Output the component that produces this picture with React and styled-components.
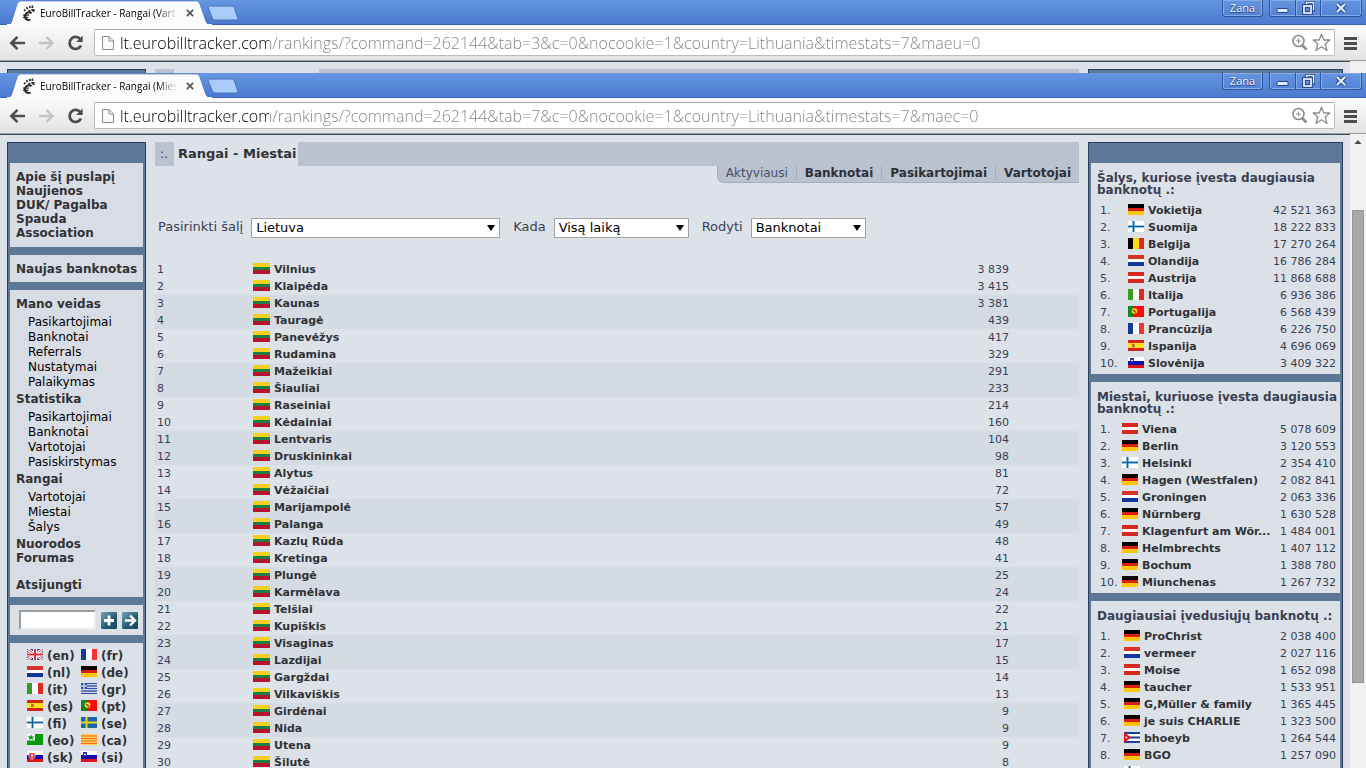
import React from 'react';
import styled, { createGlobalStyle, css } from 'styled-components';

const GlobalStyle = createGlobalStyle`
  * { box-sizing: border-box; }
  body {
    margin: 0;
    height: 100vh;
    overflow: hidden;
    background: #dde2e9;
    font-family: 'DejaVu Sans', Verdana, sans-serif;
    font-size: 12px;
    color: #393f53;
  }
  #root { height: 100%; }
  a { color: inherit; text-decoration: none; }
  button { border: 0; padding: 0; margin: 0; background: none; }
`;

/* ---------- browser window ---------- */

const Screen = styled.div`
  height: 100%;
  display: flex;
  flex-direction: column;
`;

const Window = styled.section`
  display: flex;
  flex-direction: column;
  overflow: hidden;
  ${(p) => (p.$behind ? css`flex: 0 0 73px;` : css`flex: 1; min-height: 0;`)}
`;

const Frame = styled.header`
  flex: none;
  display: flex;
  height: 25px;
  padding: 0 4px 0 7px;
  background: linear-gradient(#6596e1, #4b79cf);
  border-bottom: 1px solid #3b62ae;
`;

const Tab = styled.div`
  position: relative;
  z-index: 1;
  display: flex;
  align-items: center;
  width: 204px;
  height: 25px;
  padding: 0 17px 0 15px;
`;

const TabShape = styled.svg`
  position: absolute;
  left: 0;
  top: 0;
  z-index: -1;
`;

const TabTitle = styled.span`
  flex: 1;
  margin: 0 8px 0 4px;
  overflow: hidden;
  white-space: nowrap;
  font: 10px/14px 'Open Sans', Tahoma, sans-serif;
  color: #000;
  mask-image: linear-gradient(90deg, #000 85%, transparent);
`;

const NewTab = styled.button`
  display: flex;
  margin: 5px auto 0 -4px;
  height: 16px;
`;

const CaptionGroup = styled.div`
  display: flex;
  height: 17px;
  margin-left: 6px;
  border: 1px solid #2f559d;
  border-top: 0;
  border-radius: 0 0 3px 3px;
  box-shadow: inset 0 0 0 1px #86aae6;
`;

const CaptionButton = styled.button`
  display: flex;
  align-items: center;
  justify-content: center;
  width: ${(p) => p.$width}px;
  font: 11px/16px 'Open Sans', Tahoma, sans-serif;
  color: #fff;
  text-shadow: 0 0 1px #1d3c78, 0 1px 1px #1d3c78;
  & + & { border-left: 1px solid #2f559d; box-shadow: inset 1px 0 0 #86aae6; }
`;

const Toolbar = styled.div`
  flex: none;
  display: flex;
  align-items: center;
  height: 35px;
  padding: 0 7px 0 8px;
  background: linear-gradient(#fbfbfb, #e3e3e3);
`;

const ToolbarButton = styled.button`
  display: flex;
  width: 18px;
  height: 18px;
  margin-right: ${(p) => p.$gap || 11}px;
`;

const AddressBar = styled.div`
  flex: 1;
  display: flex;
  align-items: center;
  gap: 4px;
  height: 27px;
  margin-right: 8px;
  padding: 0 3px 0 6px;
  background: #fff;
  border: 1px solid #bdbdbd;
  border-top-color: #a9a9a9;
  border-radius: 2px;
`;

const AddressInput = styled.input`
  flex: 1;
  min-width: 0;
  padding: 0 0 0 1px;
  border: 0;
  outline: 0;
  font: 300 16px/22px 'Open Sans', Tahoma, sans-serif;
  color: transparent;
  background: linear-gradient(90deg, #000 150px, #808080 150px);
  background-clip: text;
`;

const Viewport = styled.div`
  flex: 1;
  min-height: 0;
  display: flex;
  border-top: 1px solid #9b9b9b;
  overflow: hidden;
`;

const Page = styled.div`
  flex: 1;
  display: flex;
  gap: 9px;
  padding: 7px 7px 0;
  border-top: 1px solid #3c4c69;
  overflow: hidden;
`;

const Scrollbar = styled.div`
  width: 16px;
  background: #f1f1f1;
  display: flex;
  flex-direction: column;
  align-items: center;
`;

const Thumb = styled.div`
  width: 12px;
  height: 473px;
  margin-top: 59px;
  background: #a8a8a8;
  border: 1px solid #959595;
`;

const FootIcon = () => (
  <svg width="14" height="18" viewBox="0 0 14 18" fill="none" stroke="#2b2b2b">
    <path d="M9.500 9.200C7.500 7.500 3.800 8.200 3.100 11.200C2.400 14.600 4.600 16.800 8.600 15.600" strokeWidth="2" />
    <path d="M1 11.200h6M1 13.400h5.400" strokeWidth="1.200" />
    <path d="M2 5.600l1.400 1.400M4.400 3.200l1.200 1.800M7.400 2l.8 2M10.400 1.400v2.600M9.400 5.400l2.400 1.400M6.400 6.400l2 .8M11.600 5v3" strokeWidth="1.700" />
  </svg>
);

const Browser = ({ title, url, behind, children }) => (
  <Window $behind={behind}>
    <Frame>
      <Tab>
        <TabShape width="206" height="25" viewBox="0 0 206 25">
          <path d="M0 25C4 25 4.500 22 5.500 19L9.500 6C10.500 2.500 11.500 1 14 1H189C191.500 1 192.500 2.500 193.500 6L198 19C199 22 200 25 205 25Z" fill="#fbfbfb" stroke="#3f68b4" strokeOpacity=".6" />
          <path d="M0 24.500H205" stroke="#fbfbfb" />
        </TabShape>
        <FootIcon />
        <TabTitle>{title}</TabTitle>
        <svg width="8" height="8" viewBox="0 0 9 9" stroke="#555" strokeWidth="1.900">
          <path d="M1 1l7 7M8 1L1 8" />
        </svg>
      </Tab>
      <NewTab aria-label="New tab">
        <svg width="32" height="16" viewBox="0 0 32 16">
          <path d="M3 1H24C26 1 27 2 27.600 3.500L30.500 12.500C31 14 30.500 15 29 15H9C7 15 6 14.500 5.300 13L1.300 3C1 1.500 1.500 1 3 1Z" fill="#a9cbf8" stroke="#4a72bb" />
        </svg>
      </NewTab>
      <CaptionGroup>
        <CaptionButton $width={39}>Zana</CaptionButton>
      </CaptionGroup>
      <CaptionGroup>
        <CaptionButton $width={25} aria-label="Minimize">
          <svg width="13" height="16" viewBox="0 0 13 16">
            <rect x="1" y="8.500" width="11" height="4" rx="1" fill="#dfeafc" stroke="#24437f" />
          </svg>
        </CaptionButton>
        <CaptionButton $width={25} aria-label="Restore">
          <svg width="13" height="14" viewBox="0 0 13 14" fill="none">
            <path d="M4.500 3.500V1.500H11.500V8.500H9.500" stroke="#24437f" strokeWidth="3.400" />
            <path d="M4.500 3.500V1.500H11.500V8.500H9.500" stroke="#dfeafc" strokeWidth="1.600" />
            <rect x="2" y="5" width="7" height="7" stroke="#24437f" strokeWidth="3.600" />
            <rect x="2" y="5" width="7" height="7" stroke="#dfeafc" strokeWidth="1.800" />
          </svg>
        </CaptionButton>
        <CaptionButton $width={41} aria-label="Close">
          <svg width="12" height="12" viewBox="0 0 12 12">
            <path d="M2 2l8 8M10 2l-8 8" stroke="#24437f" strokeWidth="4.400" />
            <path d="M2 2l8 8M10 2l-8 8" stroke="#dfeafc" strokeWidth="2.400" />
          </svg>
        </CaptionButton>
      </CaptionGroup>
    </Frame>
    <Toolbar>
      <ToolbarButton aria-label="Back">
        <svg width="18" height="18" viewBox="0 0 18 18" fill="none" stroke="#4d4d4d" strokeWidth="2.600">
          <path d="M17 9H4M9.500 2.800L3.300 9L9.500 15.200" />
        </svg>
      </ToolbarButton>
      <ToolbarButton aria-label="Forward">
        <svg width="18" height="18" viewBox="0 0 18 18" fill="none" stroke="#c3c3c3" strokeWidth="2.400">
          <path d="M2 9h13M9.500 3L15.500 9L9.500 15" />
        </svg>
      </ToolbarButton>
      <ToolbarButton aria-label="Reload" $gap={10}>
        <svg width="18" height="18" viewBox="0 0 18 18" fill="none">
          <path d="M14.500 5.500A6 6 0 1 0 15 11.500" stroke="#4d4d4d" strokeWidth="2.800" />
          <path d="M16.700 1.500V8H10.200Z" fill="#4d4d4d" />
        </svg>
      </ToolbarButton>
      <AddressBar>
        <svg width="14" height="16" viewBox="0 0 14 16" fill="#fafafa" stroke="#8a8a8a">
          <path d="M1.500 1.500H8L12.500 6V14.500H1.500ZM8 1.500V6H12.500" />
        </svg>
        <AddressInput aria-label="Address" defaultValue={url} />
        <svg width="17" height="17" viewBox="0 0 17 17" fill="none" stroke="#8c8c8c">
          <circle cx="7.500" cy="7" r="5.500" strokeWidth="1.600" />
          <path d="M11.500 11.500L15.500 15.500" strokeWidth="2.600" />
          <path d="M5 7h5M7.500 4.500v5" />
        </svg>
        <svg width="19" height="19" viewBox="0 0 19 19" fill="none" stroke="#8c8c8c" strokeWidth="1.300">
          <path d="M9.500 1.200L11.800 7H17.800L13.200 11L15 17.500L9.500 13.800L4 17.500L5.800 11L1.200 7H7.200Z" strokeLinejoin="round" />
        </svg>
      </AddressBar>
      <ToolbarButton aria-label="Menu" $gap={-2}>
        <svg width="15" height="18" viewBox="0 0 15 18" stroke="#4d4d4d" strokeWidth="3">
          <path d="M1 4.500h13M1 9.500h13M1 14.500h13" />
        </svg>
      </ToolbarButton>
    </Toolbar>
    <Viewport>
      <Page>{children}</Page>
      <Scrollbar>
        <svg width="16" height="17" viewBox="0 0 16 17">
          <path d="M8 6l3.500 4h-7z" fill="#4a4a4a" />
        </svg>
        <Thumb />
      </Scrollbar>
    </Viewport>
  </Window>
);

/* ---------- flags ---------- */

const horizontal = {
  lt: ['#f4cf1d', '#1d7d45', '#b9122b'],
  de: ['#000', '#dc1f12', '#fdc50b'],
  nl: ['#d63226', '#fff', '#12359c'],
  at: ['#d3291f', '#fbf3ef', '#d3291f'],
};
const vertical = {
  be: ['#000', '#fbdc14', '#dd2a1f'],
  it: ['#3b9a22', '#fff', '#dd2a1f'],
  fr: ['#173a93', '#fff', '#f23530'],
};

const flagArt = {
  es: <><rect width="16" height="11" fill="#d0261c" /><rect y="3" width="16" height="5" fill="#ffe21a" /><path d="M4 4h3v3h-3z" fill="#d08a3c" /><path d="M5 3.500v4" stroke="#a4491e" /></>,
  fi: <><rect width="16" height="11" fill="#fff" /><path d="M0 5.500h16M5.500 0v11" stroke="#6fa9cf" strokeWidth="2.600" /><path d="M0 5.500h16M5.500 0v11" stroke="#0f5fa6" /></>,
  se: <><rect width="16" height="11" fill="#1c66a8" /><path d="M0 5.500h16M5.500 0v11" stroke="#f1d51c" strokeWidth="2" /></>,
  pt: <><rect width="16" height="11" fill="#fb0d0a" /><rect width="6" height="11" fill="#17861f" /><circle cx="6.500" cy="5" r="2.800" fill="#f6dc3e" /><path d="M5 4l3 2.500" stroke="#c22516" strokeWidth="1.600" /></>,
  si: <><rect width="16" height="11" fill="#1010a8" /><rect width="16" height="4" fill="#fff" /><rect y="8" width="16" height="3" fill="#e0141c" /><path d="M2 1h4v3L4 6L2 4z" fill="#2a35b4" /><path d="M3 3.500h2" stroke="#fff" /></>,
  sk: <><rect width="16" height="11" fill="#1010a8" /><rect width="16" height="4" fill="#fff" /><rect y="8" width="16" height="3" fill="#e0141c" /><path d="M2 2h6v4.500L5 8.500L2 6.500z" fill="#e0141c" stroke="#fff" strokeWidth=".6" /><path d="M5 3v4M3.600 4.500h2.800" stroke="#fff" strokeWidth=".9" /></>,
  gr: <><rect width="16" height="11" fill="#fff" /><path d="M0 .5h16M0 3h16M0 5.500h16M0 8h16M0 10.500h16" stroke="#2f4fa5" strokeWidth="1.400" /><rect width="6" height="6" fill="#2f4fa5" /><path d="M3 0v6M0 3h6" stroke="#fff" /></>,
  eo: <><rect width="16" height="11" fill="#079b0c" /><rect width="8" height="6.500" fill="#eef8ee" /><path d="M4 .5l1 2h2.500l-2 1.400.9 2.200L4 4.700 1.600 6.100l.9-2.200-2-1.400H3z" fill="#079b0c" /></>,
  ca: <><rect width="16" height="11" fill="#fdcf4b" /><path d="M0 2h16M0 4.500h16M0 7h16M0 9.500h16" stroke="#ee6a26" strokeWidth="1.200" /></>,
  cu: <><rect width="16" height="11" fill="#fff" /><path d="M0 1h16M0 5.500h16M0 10h16" stroke="#17419a" strokeWidth="2" /><path d="M0 0L7 5.500L0 11z" fill="#e0141c" /><circle cx="2.300" cy="5.500" r="1" fill="#fff" /></>,
  en: <><rect width="16" height="11" fill="#2c3f94" /><path d="M0 0L16 11M16 0L0 11" stroke="#fff" strokeWidth="3" /><path d="M0 0L16 11M16 0L0 11" stroke="#df4450" /><path d="M8 0v11M0 5.500h16" stroke="#fff" strokeWidth="4" /><path d="M8 0v11M0 5.500h16" stroke="#dd2f35" strokeWidth="2" /></>,
};

const FlagSvg = styled.svg`
  display: inline-block;
  flex: none;
  margin: 0 4px 3px 0;
`;

const Flag = ({ code, width = 16 }) => (
  <FlagSvg width={width} height="11" viewBox="0 0 16 11" preserveAspectRatio="none" shapeRendering={flagArt[code] ? 'auto' : 'crispEdges'}>
    {horizontal[code] && horizontal[code].map((c, i) => <rect key={i} y={i * 3.67} width="16" height="3.700" fill={c} />)}
    {vertical[code] && vertical[code].map((c, i) => <rect key={i} x={i * 5.33} width="5.400" height="11" fill={c} />)}
    {flagArt[code]}
  </FlagSvg>
);

/* ---------- side panels ---------- */

const Panel = styled.aside`
  flex: none;
  width: ${(p) => p.$width}px;
  display: flex;
  flex-direction: column;
  gap: 8px;
  padding: 20px 2px 0;
  border: 1px solid #2b3d5b;
  border-bottom: 0;
  background: #5f7797;
`;

const Box = styled.div`
  flex: none;
  padding: 7px 6px;
  background: #dce1e8;
`;

const MenuBox = styled(Box)`
  padding-bottom: ${(p) => p.$bottom || 7}px;
  background: #d8dce4;
`;

const MenuLink = styled.a`
  display: block;
  margin-top: ${(p) => p.$top || 0}px;
  font-weight: bold;
  line-height: 14px;
  color: #303236;
  white-space: nowrap;
`;

const SubMenu = styled.div`
  padding: 4px 0 2px 12px;
`;

const SubLink = styled.a`
  display: block;
  line-height: 15px;
  color: #000;
`;

const SearchBox = styled(Box)`
  display: flex;
  align-items: center;
  gap: 5px;
  height: 30px;
  padding: 0 5px 0 9px;
`;

const SearchInput = styled.input`
  flex: 1;
  min-width: 0;
  height: 20px;
  border: 2px solid #9c9c9c;
  border-right-color: #ececec;
  border-bottom-color: #ececec;
  background: #fff;
`;

const IconButton = styled.button`
  display: flex;
  align-items: center;
  justify-content: center;
  width: 16px;
  height: 17px;
  background: linear-gradient(135deg, #79a5b4, #215a70 60%, #17465c);
  border-radius: 1px;
`;

const LanguageBox = styled(Box)`
  flex: 1;
  display: grid;
  grid-template-columns: 54px 54px;
  grid-auto-rows: 17px;
  padding: 4px 0 0 17px;
`;

const Language = styled.a`
  display: flex;
  align-items: center;
  font-size: 12px;
  font-weight: bold;
  color: #303236;
`;

const BoxTitle = styled.h3`
  margin: 2px 0 6px;
  font-size: 12px;
  line-height: 12px;
`;

const TopTable = styled.table`
  width: 100%;
  table-layout: fixed;
  border-collapse: collapse;
  font-size: 11px;
  td { height: 17px; padding: 0; line-height: 16px; white-space: nowrap; }
`;

const RankCell = styled.td`
  width: ${(p) => p.$width}px;
`;

const NameCell = styled.td`
  overflow: visible;
  font-weight: bold;
  color: #303236;
`;

const CountCell = styled.td`
  width: ${(p) => p.$width || 70}px;
  text-align: right;
`;

const TopBox = styled(Box)`
  padding: 7px 0 2px 6px;
  table { margin-left: 3px; width: calc(100% - 7px); }
`;

const NameLine = styled.a`
  display: flex;
  align-items: center;
`;

const menu = [
  { name: 'Mano veidas', items: ['Pasikartojimai', 'Banknotai', 'Referrals', 'Nustatymai', 'Palaikymas'] },
  { name: 'Statistika', items: ['Pasikartojimai', 'Banknotai', 'Vartotojai', 'Pasiskirstymas'] },
  { name: 'Rangai', items: ['Vartotojai', 'Miestai', 'Šalys'] },
];

const languages = ['en', 'fr', 'nl', 'de', 'it', 'gr', 'es', 'pt', 'fi', 'se', 'eo', 'ca', 'sk', 'si'];

const tops = [
  {
    title: 'Šalys, kuriose įvesta daugiausia banknotų .:',
    rankWidth: 28,
    rows: [
      ['de', 'Vokietija', '42 521 363'],
      ['fi', 'Suomija', '18 222 833'],
      ['be', 'Belgija', '17 270 264'],
      ['nl', 'Olandija', '16 786 284'],
      ['at', 'Austrija', '11 868 688'],
      ['it', 'Italija', '6 936 386'],
      ['pt', 'Portugalija', '6 568 439'],
      ['fr', 'Prancūzija', '6 226 750'],
      ['es', 'Ispanija', '4 696 069'],
      ['si', 'Slovėnija', '3 409 322'],
    ],
  },
  {
    title: 'Miestai, kuriuose įvesta daugiausia banknotų .:',
    rankWidth: 22,
    rows: [
      ['at', 'Viena', '5 078 609'],
      ['de', 'Berlin', '3 120 553'],
      ['fi', 'Helsinki', '2 354 410'],
      ['de', 'Hagen (Westfalen)', '2 082 841'],
      ['nl', 'Groningen', '2 063 336'],
      ['de', 'Nürnberg', '1 630 528'],
      ['at', 'Klagenfurt am Wör...', '1 484 001'],
      ['de', 'Helmbrechts', '1 407 112'],
      ['de', 'Bochum', '1 388 780'],
      ['de', 'Miunchenas', '1 267 732'],
    ],
  },
  {
    title: 'Daugiausiai įvedusiųjų banknotų .:',
    rankWidth: 24,
    rows: [
      ['de', 'ProChrist', '2 038 400'],
      ['nl', 'vermeer', '2 027 116'],
      ['at', 'Moise', '1 652 098'],
      ['de', 'taucher', '1 533 951'],
      ['de', 'G,Müller & family', '1 365 445'],
      ['de', 'je suis CHARLIE', '1 323 500'],
      ['cu', 'bhoeyb', '1 264 544'],
      ['de', 'BGO', '1 257 090'],
      ['fi', '', ''],
    ],
  },
];

/* ---------- main column ---------- */

const Main = styled.main`
  flex: 1;
  min-width: 0;
`;

const TitleBar = styled.div`
  display: flex;
  height: 24px;
  background: #bac1cf;
`;

const TitleMark = styled.span`
  width: 19px;
  padding-left: 5px;
  line-height: 24px;
  font-size: 12px;
`;

const PageTitle = styled.h1`
  min-width: ${(p) => p.$width || 0}px;
  margin: 0;
  padding: 0 2px 0 4px;
  background: #dde2e9;
  font-size: 13px;
  line-height: 24px;
  color: #303236;
`;

const Tabs = styled.nav`
  display: flex;
  width: fit-content;
  margin-left: auto;
  padding-bottom: 2px;
  background: #bac1cf;
  border: solid #a2aebc;
  border-width: 0 0 1px 1px;
  border-bottom-left-radius: 7px;
`;

const TabLink = styled.a`
  padding: 0 8px;
  line-height: 14px;
  font-weight: ${(p) => (p.$active ? 'normal' : 'bold')};
  color: ${(p) => (p.$active ? '#4a5168' : '#2e3036')};
  & + & { border-left: 1px solid #a2aebc; }
`;

const Filters = styled.form`
  display: flex;
  align-items: center;
  margin: 35px 0 23px 3px;
  font-size: 13px;
`;

const FilterLabel = styled.label`
  margin-right: 8px;
  padding-bottom: 3px;
`;

const SelectWrap = styled.span`
  position: relative;
  width: ${(p) => p.$width}px;
  margin-right: 13px;
  &::after {
    content: '';
    position: absolute;
    right: 5px;
    top: 7px;
    border: solid transparent;
    border-width: 6px 4px 0;
    border-top-color: #000;
    pointer-events: none;
  }
`;

const Select = styled.select`
  display: block;
  appearance: none;
  width: 100%;
  height: 20px;
  padding: 0 4px;
  border: 1px solid #a3a3a3;
  border-radius: 0;
  background: #fff;
  font: 13px/18px 'DejaVu Sans', Verdana, sans-serif;
  color: #000;
`;

const RankTable = styled.table`
  width: 100%;
  table-layout: fixed;
  border-collapse: collapse;
  font-size: 11px;
  td { height: 17px; padding: 0; line-height: 17px; }
  tr:nth-child(4n + 3), tr:nth-child(4n + 4) { background: #d5dbe3; }
  td:first-child { padding-left: 2px; }
  td:last-child { padding-right: 70px; }
`;

const cities = [
  ['Vilnius', '3 839'], ['Klaipėda', '3 415'], ['Kaunas', '3 381'], ['Tauragė', '439'],
  ['Panevėžys', '417'], ['Rudamina', '329'], ['Mažeikiai', '291'], ['Šiauliai', '233'],
  ['Raseiniai', '214'], ['Kėdainiai', '160'], ['Lentvaris', '104'], ['Druskininkai', '98'],
  ['Alytus', '81'], ['Vėžaičiai', '72'], ['Marijampolė', '57'], ['Palanga', '49'],
  ['Kazlų Rūda', '48'], ['Kretinga', '41'], ['Plungė', '25'], ['Karmėlava', '24'],
  ['Telšiai', '22'], ['Kupiškis', '21'], ['Visaginas', '17'], ['Lazdijai', '15'],
  ['Gargždai', '14'], ['Vilkaviškis', '13'], ['Girdėnai', '9'], ['Nida', '9'],
  ['Utena', '9'], ['Šilutė', '8'],
];

const filters = [
  { id: 'country', label: 'Pasirinkti šalį', value: 'Lietuva', width: 249 },
  { id: 'when', label: 'Kada', value: 'Visą laiką', width: 135 },
  { id: 'show', label: 'Rodyti', value: 'Banknotai', width: 115 },
];

const LeftPanel = () => (
  <Panel $width={139}>
    <MenuBox>
      {['Apie šį puslapį', 'Naujienos', 'DUK/ Pagalba', 'Spauda', 'Association'].map((name) => (
        <MenuLink key={name} href="#">{name}</MenuLink>
      ))}
    </MenuBox>
    <MenuBox $bottom={6}>
      <MenuLink href="#">Naujas banknotas</MenuLink>
    </MenuBox>
    <MenuBox $bottom={5}>
      {menu.map((group) => (
        <React.Fragment key={group.name}>
          <MenuLink href="#">{group.name}</MenuLink>
          <SubMenu>
            {group.items.map((item) => <SubLink key={item} href="#">{item}</SubLink>)}
          </SubMenu>
        </React.Fragment>
      ))}
      <MenuLink href="#">Nuorodos</MenuLink>
      <MenuLink href="#">Forumas</MenuLink>
      <MenuLink href="#" $top={13}>Atsijungti</MenuLink>
    </MenuBox>
    <SearchBox>
      <SearchInput aria-label="Search" />
      <IconButton aria-label="Add">
        <svg width="12" height="13" viewBox="0 0 13 13" stroke="#fff" strokeWidth="3">
          <path d="M6.500 1v11M1 6.500h11" />
        </svg>
      </IconButton>
      <IconButton aria-label="Go">
        <svg width="13" height="13" viewBox="0 0 13 13" fill="none" stroke="#fff" strokeWidth="2.400">
          <path d="M1 6.500h10M6 1.500l5 5l-5 5" />
        </svg>
      </IconButton>
    </SearchBox>
    <LanguageBox>
      {languages.map((code) => (
        <Language key={code} href="#"><Flag code={code} />({code})</Language>
      ))}
    </LanguageBox>
  </Panel>
);

const RightPanel = () => (
  <Panel $width={255}>
    {tops.map((top) => (
      <TopBox key={top.title}>
        <BoxTitle>{top.title}</BoxTitle>
        <TopTable>
          <tbody>
            {top.rows.map(([flag, name, count], i) => (
              <tr key={i}>
                <RankCell $width={top.rankWidth}>{name && `${i + 1}.`}</RankCell>
                <NameCell><NameLine href="#"><Flag code={flag} />{name}</NameLine></NameCell>
                <CountCell>{count}</CountCell>
              </tr>
            ))}
          </tbody>
        </TopTable>
      </TopBox>
    ))}
  </Panel>
);

export default function App() {
  return (
    <Screen>
      <GlobalStyle />
      <Browser
        behind
        title="EuroBillTracker - Rangai (Vart"
        url="lt.eurobilltracker.com/rankings/?command=262144&tab=3&c=0&nocookie=1&country=Lithuania&timestats=7&maeu=0"
      >
        <Panel $width={139} />
        <Main>
          <TitleBar>
            <TitleMark />
            <PageTitle as="div" $width={145} />
          </TitleBar>
        </Main>
        <Panel $width={255} />
      </Browser>
      <Browser
        title="EuroBillTracker - Rangai (Mies"
        url="lt.eurobilltracker.com/rankings/?command=262144&tab=7&c=0&nocookie=1&country=Lithuania&timestats=7&maec=0"
      >
        <LeftPanel />
        <Main>
          <TitleBar>
            <TitleMark>:.</TitleMark>
            <PageTitle>Rangai - Miestai</PageTitle>
          </TitleBar>
          <Tabs>
            <TabLink href="#" $active>Aktyviausi</TabLink>
            <TabLink href="#">Banknotai</TabLink>
            <TabLink href="#">Pasikartojimai</TabLink>
            <TabLink href="#">Vartotojai</TabLink>
          </Tabs>
          <Filters>
            {filters.map((f) => (
              <React.Fragment key={f.id}>
                <FilterLabel htmlFor={f.id}>{f.label}</FilterLabel>
                <SelectWrap $width={f.width}>
                  <Select id={f.id}><option>{f.value}</option></Select>
                </SelectWrap>
              </React.Fragment>
            ))}
          </Filters>
          <RankTable>
            <tbody>
              {cities.map(([name, count], i) => (
                <tr key={name}>
                  <RankCell $width={98}>{i + 1}</RankCell>
                  <NameCell><NameLine href="#"><Flag code="lt" width={17} />{name}</NameLine></NameCell>
                  <CountCell $width={200}>{count}</CountCell>
                </tr>
              ))}
            </tbody>
          </RankTable>
        </Main>
        <RightPanel />
      </Browser>
    </Screen>
  );
}
